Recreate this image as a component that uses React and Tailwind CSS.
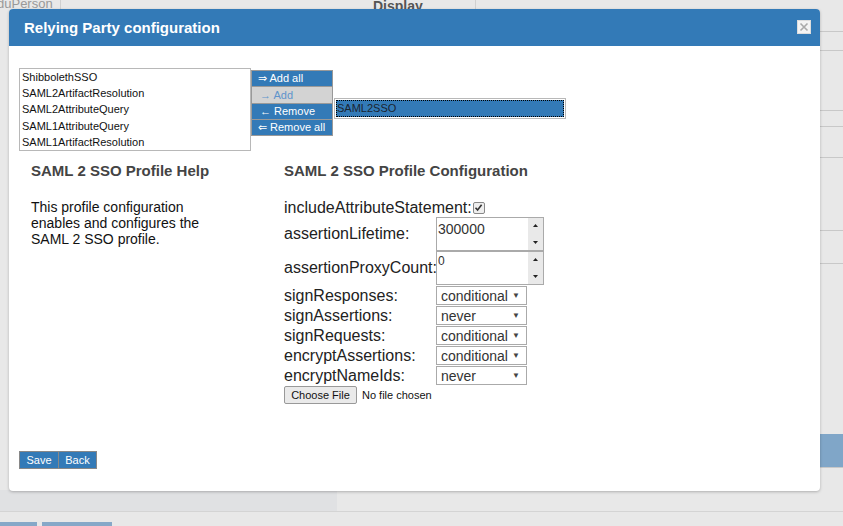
import React from "react";

function Spinner() {
  return (
    <div className="flex w-[15px] flex-col justify-between bg-[#e9e9e9] py-[5px] text-[#222]">
      <svg width="15" height="5" viewBox="0 0 15 5"><path d="M5 4 L7.5 1 L10 4 Z" fill="#222" /></svg>
      <svg width="15" height="5" viewBox="0 0 15 5"><path d="M5 1 L7.5 4 L10 1 Z" fill="#222" /></svg>
    </div>
  );
}

function NumInput({ value, small }) {
  return (
    <div className="flex h-[34px] w-[108px] border border-[#aaa] bg-white">
      <div className={"flex-1 pl-[1px] leading-none text-[#333] " + (small ? "pt-[3px] text-[12px]" : "pt-[4px] text-[14px]")}>{value}</div>
      <Spinner />
    </div>
  );
}

function Sel({ value }) {
  return (
    <div className="flex h-[19px] w-[91px] items-center justify-between border border-[#aaa] bg-white pl-[4px] pr-[6px]">
      <span className="text-[14px] leading-none text-[#333]">{value}</span>
      <span className="text-[8px] leading-none text-[#444]">▼</span>
    </div>
  );
}

function Row({ label, children, h }) {
  return (
    <div className={"flex items-center " + h}>
      <div className="w-[152px] whitespace-nowrap text-[16px] leading-none text-[#222]">{label}</div>
      {children}
    </div>
  );
}

export default function App() {
  const items = [
    "ShibbolethSSO",
    "SAML2ArtifactResolution",
    "SAML2AttributeQuery",
    "SAML1AttributeQuery",
    "SAML1ArtifactResolution",
  ];
  return (
    <div className="relative h-[526px] w-[843px] overflow-hidden bg-[#e8e8e8] font-['Liberation_Sans',Arial,sans-serif]">
      {/* background page */}
      <div className="flex h-[490px]">
        <div className="w-[61px] border-r border-[#d0d0d0]">
          <div className="-ml-[3px] -mt-[6px] text-[13px] text-[#999]">duPerson</div>
        </div>
        <div className="w-[276px]" />
        <div className="w-[139px] border-r border-[#d0d0d0]">
          <div className="-mt-[4px] pl-[36px] text-[14px] font-bold text-[#555]">Display</div>
        </div>
        <div className="flex flex-1 flex-col">
          <div className="h-[32px] shrink-0 border-b border-[#c8c8c8]" />
          <div className="h-[19px] shrink-0 border-b border-[#c8c8c8]" />
          <div className="h-[60px] shrink-0 border-b border-[#c8c8c8]" />
          <div className="h-[16px] shrink-0 border-b border-[#c8c8c8]" />
          <div className="h-[31px] shrink-0 border-b border-[#c8c8c8]" />
          <div className="h-[73px] shrink-0 border-b border-[#c8c8c8]" />
          <div className="h-[33px] shrink-0 border-b border-[#c8c8c8]" />
          <div className="h-[170px] shrink-0" />
          <div className="h-[34px] shrink-0 border-b border-[#c8c8c8] bg-[#80a6c8]" />
        </div>
      </div>
      <div className="flex h-[22px] border-b border-[#d4d4d4]">
        <div className="w-[337px] bg-[#e0e1e3]" />
      </div>
      <div className="mt-[10px] flex gap-[5px]">
        <div className="h-[8px] w-[37px] bg-[#86a8c8]" />
        <div className="h-[8px] w-[70px] bg-[#86a8c8]" />
      </div>

      {/* modal */}
      <div className="absolute left-[9px] top-[9px] flex h-[482px] w-[811px] flex-col overflow-hidden rounded-[4px] bg-white shadow-[0_1px_3px_rgba(0,0,0,0.25)]">
        <div className="flex h-[37px] items-center justify-between bg-[#337ab7] pl-[15px] pr-[9px]">
          <span className="mt-[1px] text-[15px] font-bold text-white">Relying Party configuration</span>
          <div className="-mt-[2px] flex h-[14px] w-[14px] items-center justify-center border border-[#ddd] bg-[#f4f4f4]">
            <svg width="10" height="10" viewBox="0 0 10 10"><path d="M1.5 1.5 L8.5 8.5 M8.5 1.5 L1.5 8.5" stroke="#aaa" strokeWidth="1.6" /></svg>
          </div>
        </div>
        <div className="flex flex-col px-[10px] pt-[22px]">
          <div className="flex items-start">
            <div className="flex h-[83px] w-[232px] flex-col border border-[#b8b8b8] pl-[2px]">
              {items.map((t) => (
                <div key={t} className="flex h-[16.25px] items-center text-[11px] text-[#111]">{t}</div>
              ))}
            </div>
            <div className="mt-[2px] flex w-[82px] flex-col text-[11px]">
              <div className="flex h-[17px] items-center border border-[#999] bg-[#337ab7] pl-[6px] text-white">⇒ Add all</div>
              <div className="-mt-px flex h-[18px] items-center border border-[#999] bg-[#d3d3d3] pl-[8px] text-[#5f93cc]">→ Add</div>
              <div className="-mt-px flex h-[17px] items-center border border-[#999] bg-[#337ab7] pl-[8px] text-white">← Remove</div>
              <div className="-mt-px flex h-[17px] items-center border border-[#999] bg-[#337ab7] pl-[6px] text-white">⇐ Remove all</div>
            </div>
            <div className="ml-[1px] mt-[30px] h-[21px] w-[232px] border border-[#b8b8b8] p-[1px]">
              <div className="flex h-[17px] items-center bg-[#337ab7] pl-[1px] text-[11px] text-[#1a2430] outline-1 outline-dotted outline-black -outline-offset-1">SAML2SSO</div>
            </div>
          </div>

          <div className="mt-[11px] flex">
            <div className="w-[265px] pl-[12px]">
              <div className="text-[15px] font-bold leading-[17px] text-[#444]">SAML 2 SSO Profile Help</div>
              <p className="mt-[20px] w-[185px] text-[14px] leading-[16px] text-[#111]">
                This profile configuration enables and configures the SAML 2 SSO profile.
              </p>
            </div>
            <div className="flex flex-col">
              <div className="text-[15px] font-bold leading-[17px] text-[#444]">SAML 2 SSO Profile Configuration</div>
              <div className="mt-[19px] flex h-[19px] items-center">
                <span className="whitespace-nowrap text-[16px] leading-none text-[#222]">includeAttributeStatement:</span>
                <div className="ml-[1px] flex h-[12px] w-[12px] items-center justify-center rounded-[2px] border border-[#888] bg-[#eee]">
                  <svg width="9" height="9" viewBox="0 0 9 9"><path d="M1.5 4.8 L3.6 7 L7.6 1.8" stroke="#333" strokeWidth="1.6" fill="none" /></svg>
                </div>
              </div>
              <Row label="assertionLifetime:" h="h-[34px]"><NumInput value="300000" /></Row>
              <Row label="assertionProxyCount:" h="h-[34px]"><NumInput value="0" small /></Row>
              <div className="mt-[1px] flex flex-col gap-[1px]">
                <Row label="signResponses:" h="h-[19px]"><Sel value="conditional" /></Row>
                <Row label="signAssertions:" h="h-[19px]"><Sel value="never" /></Row>
                <Row label="signRequests:" h="h-[19px]"><Sel value="conditional" /></Row>
                <Row label="encryptAssertions:" h="h-[19px]"><Sel value="conditional" /></Row>
                <Row label="encryptNameIds:" h="h-[19px]"><Sel value="never" /></Row>
              </div>
              <div className="mt-[1px] flex items-center">
                <div className="flex h-[18px] w-[73px] items-center justify-center rounded-[2px] border border-[#999] bg-[#eaeaea] text-[11px] text-[#111]">Choose File</div>
                <span className="ml-[5px] text-[11px] text-[#111]">No file chosen</span>
              </div>
            </div>
          </div>

          <div className="mt-[47px] flex text-[11px] text-white">
            <div className="flex h-[18px] w-[40px] items-center justify-center border border-[#888] bg-[#337ab7]">Save</div>
            <div className="-ml-px flex h-[18px] w-[39px] items-center justify-center border border-[#888] bg-[#337ab7]">Back</div>
          </div>
        </div>
      </div>
    </div>
  );
}
